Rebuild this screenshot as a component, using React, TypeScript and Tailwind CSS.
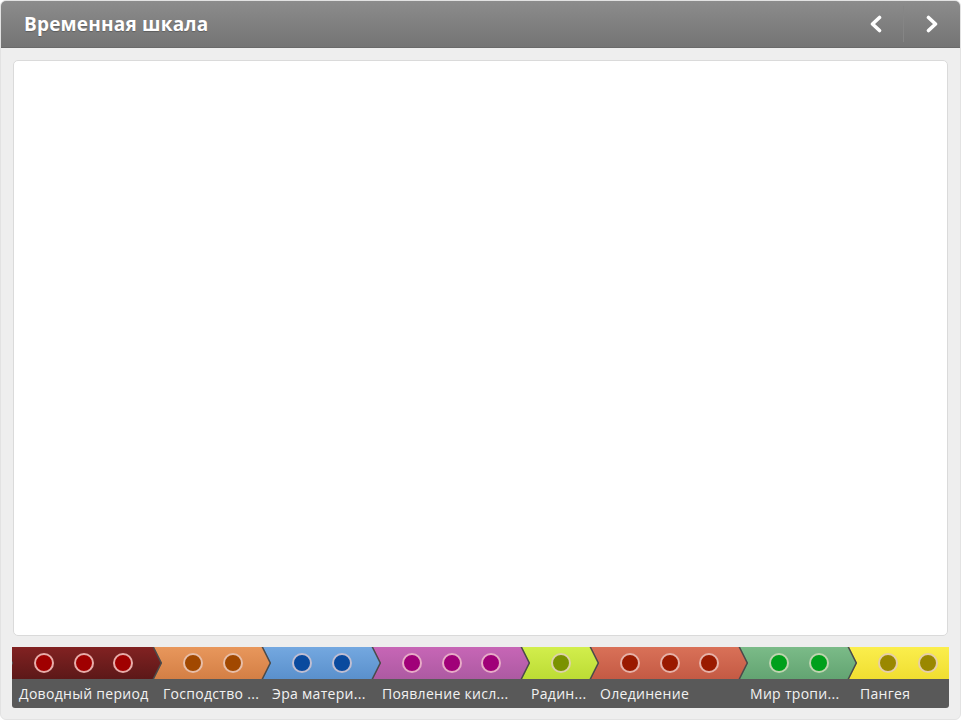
import React from 'react'

type Era = {
  label: string
  width: number
  dots: number
  bg: string
  dot: string
  labelPad: string
}

// timeline eras, left to right
const eras: Era[] = [
  { label: 'Доводный период', width: 149, dots: 3, bg: 'from-[#822222] to-[#5c1818]', dot: 'bg-[#a00000]', labelPad: 'pl-[14px]' },
  { label: 'Господство ...', width: 109, dots: 2, bg: 'from-[#e8975c] to-[#d47f45]', dot: 'bg-[#a14800]', labelPad: 'pl-[9px]' },
  { label: 'Эра матери...', width: 110, dots: 2, bg: 'from-[#74a8e0] to-[#5a90cc]', dot: 'bg-[#0a4a9e]', labelPad: 'pl-[9px]' },
  { label: 'Появление кисл...', width: 149, dots: 3, bg: 'from-[#c766b6] to-[#ad5aa2]', dot: 'bg-[#a00078]', labelPad: 'pl-[9px]' },
  { label: 'Радин...', width: 69, dots: 1, bg: 'from-[#d2ee4c] to-[#bcdc34]', dot: 'bg-[#7a9200]', labelPad: 'pl-[9px]' },
  { label: 'Олединение', width: 149, dots: 3, bg: 'from-[#d97158] to-[#c45a44]', dot: 'bg-[#9a1a00]', labelPad: 'pl-[9px]' },
  { label: 'Мир тропи...', width: 109, dots: 2, bg: 'from-[#7bbb88] to-[#63a472]', dot: 'bg-[#00a01c]', labelPad: 'pl-[10px]' },
  { label: 'Пангея', width: 110, dots: 2, bg: 'from-[#fbee4c] to-[#f0de30]', dot: 'bg-[#9a8800]', labelPad: 'pl-[11px]' },
]

const Chevron = ({ dir }: { dir: 'left' | 'right' }) => (
  <svg width="14" height="18" viewBox="0 0 14 18" fill="none">
    <polyline
      points={dir === 'left' ? '10.5,2.5 3.5,9 10.5,15.5' : '3.5,2.5 10.5,9 3.5,15.5'}
      stroke="white"
      strokeWidth="3.6"
      strokeLinecap="round"
      strokeLinejoin="round"
    />
  </svg>
)

export default function App() {
  return (
    <div className="w-[961px] h-[720px] bg-white font-['Open_Sans','Liberation_Sans',sans-serif]">
      <div className="w-full h-full flex flex-col bg-[#eeeeee] rounded-[6px] overflow-hidden border border-[#e2e2e2]">
        {/* header */}
        <div className="h-[47px] shrink-0 flex items-center bg-linear-to-b from-[#8c8c8c] to-[#747474] border-b border-[#6a6a6a]">
          <h1 className="pl-[23px] text-[19px] font-bold text-white tracking-[0.2px] [text-shadow:0_1px_1px_rgba(0,0,0,0.25)]">
            Временная шкала
          </h1>
          <div className="ml-auto flex h-full items-center">
            <button className="w-[54px] h-full flex items-center justify-center">
              <Chevron dir="left" />
            </button>
            <div className="w-px h-[36px] bg-[#6e6e6e] border-r border-[#858585]" />
            <button className="w-[56px] h-full flex items-center justify-center">
              <Chevron dir="right" />
            </button>
          </div>
        </div>

        {/* stage */}
        <div className="mx-[12px] mt-[12px] flex-1 bg-white border border-[#dadada] rounded-[5px]" />

        {/* timeline */}
        <div className="mx-[11px] mt-[11px] mb-[11px] h-[61px] shrink-0 flex flex-col bg-[#595959] rounded-b-[3px] overflow-hidden">
          <div className="h-[32px] flex ml-[-7px]">
            {eras.map((era, i) => (
              <div
                key={i}
                className="relative shrink-0 h-full mr-[-8px] bg-[#4a4a4a] [clip-path:polygon(0_0,calc(100%_-_8px)_0,100%_50%,calc(100%_-_8px)_100%,0_100%,8px_50%)]"
                style={{ width: era.width + 8, zIndex: i }}
              >
                <div
                  className={`h-full flex items-center gap-[19.5px] pl-[29px] bg-linear-to-b ${era.bg} [clip-path:polygon(0_0,calc(100%_-_9.5px)_0,calc(100%_-_1.5px)_50%,calc(100%_-_9.5px)_100%,0_100%,8px_50%)]`}
                >
                  {Array.from({ length: era.dots }).map((_, j) => (
                    <span
                      key={j}
                      className={`w-[20px] h-[20px] shrink-0 rounded-full border-2 border-[rgba(255,230,225,0.75)] ${era.dot}`}
                    />
                  ))}
                </div>
              </div>
            ))}
          </div>
          <div className="flex-1 flex items-center ml-[-7px] text-[14px] tracking-[0.3px] text-[#f2f2f2] whitespace-nowrap">
            {eras.map((era, i) => (
              <div key={i} className={`shrink-0 overflow-hidden ${era.labelPad}`} style={{ width: era.width }}>
                {era.label}
              </div>
            ))}
          </div>
        </div>
      </div>
    </div>
  )
}
